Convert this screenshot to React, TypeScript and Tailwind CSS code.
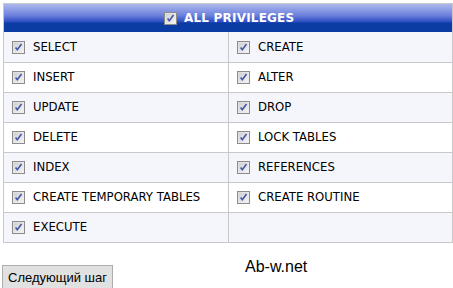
import React from 'react';

const rows: [string, string][] = [
  ["SELECT", "CREATE"],
  ["INSERT", "ALTER"],
  ["UPDATE", "DROP"],
  ["DELETE", "LOCK TABLES"],
  ["INDEX", "REFERENCES"],
  ["CREATE TEMPORARY TABLES", "CREATE ROUTINE"],
  ["EXECUTE", ""],
];

const CheckBox = () => (
  <svg width="13" height="13" viewBox="0 0 13 13" className="shrink-0">
    <defs>
      <linearGradient id="cbg" x1="0" y1="0" x2="1" y2="1">
        <stop offset="0" stopColor="#cfcfcf" />
        <stop offset="1" stopColor="#f4f4f4" />
      </linearGradient>
    </defs>
    <rect x="0.5" y="0.5" width="12" height="12" fill="#ececec" stroke="#8c8c8c" />
    <rect x="1.5" y="1.5" width="10" height="10" fill="url(#cbg)" />
    <path d="M3.6 6.4 L5.3 8.7 L9.5 3" stroke="#4456aa" strokeWidth="1.6" fill="none" />
  </svg>
);

const Cell = ({ label, last }: { label: string; last?: boolean }) => (
  <div className={`flex items-center gap-[8px] pl-[8px] h-full ${last ? '' : 'border-r border-[#c9c9c9]'}`}>
    {label && <CheckBox />}
    {label && <span className="text-[11.7px] text-black leading-none pt-[1px]">{label}</span>}
  </div>
);

export default function App() {
  return (
    <div className="w-[453px] h-[288px] bg-white overflow-hidden pt-[3px] pl-[3px] font-['DejaVu_Sans',Verdana,sans-serif]">
      <div className="w-[450px] border border-[#c9c9c9]">
        <div className="h-[28px] flex items-center pl-[160px] gap-[7px] bg-[linear-gradient(to_bottom,#aeb8ee_0%,#6d82dc_40%,#2c4cc4_64%,#0b3ca4_68%,#0b3ca4_100%)]">
          <CheckBox />
          <span className="text-white font-bold text-[12px] leading-none tracking-[0.2px]">ALL PRIVILEGES</span>
        </div>
        {rows.map((r, i) => (
          <div
            key={i}
            className={`grid grid-cols-[225px_1fr] h-[30px] ${i === 0 ? 'h-[29px]' : 'border-t border-[#c9c9c9]'} ${i % 2 === 0 ? 'bg-[#f5f6fc]' : 'bg-white'}`}
          >
            <Cell label={r[0]} />
            <Cell label={r[1]} last />
          </div>
        ))}
      </div>
      <div className="flex items-start -ml-[1px]">
        <button className="mt-[22px] h-[24px] w-[111px] bg-[#e1e1e1] border border-[#adadad] text-[13px] text-black font-['Liberation_Sans',Arial,sans-serif] leading-none">
          Следующий шаг
        </button>
        <span className="ml-[132px] mt-[12px] text-[16px] text-black font-['Liberation_Sans',Arial,sans-serif]">Ab-w.net</span>
      </div>
    </div>
  );
}
